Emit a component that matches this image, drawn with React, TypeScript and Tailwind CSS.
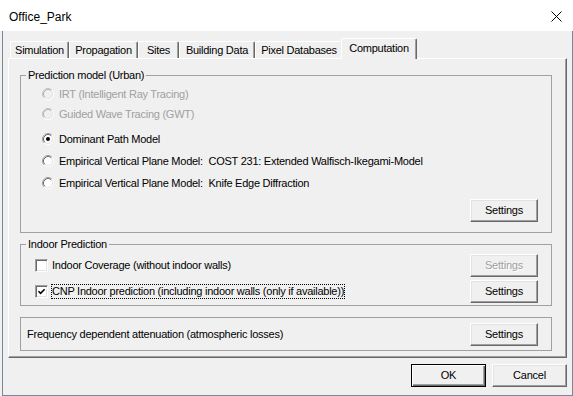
import type { ReactNode } from "react";

const tabs = [
  { label: "Simulation", width: "w-[59px]" },
  { label: "Propagation", width: "w-[69px]" },
  { label: "Sites", width: "w-[41px]" },
  { label: "Building Data", width: "w-[76px]" },
  { label: "Pixel Databases", width: "w-[88px]" },
];

function Radio({ checked = false, disabled = false }: { checked?: boolean; disabled?: boolean }) {
  const outer = disabled ? "#c4c4c4" : "#a0a0a0";
  const inner = disabled ? "#b0b0b0" : "#696969";
  return (
    <svg width="12" height="12" viewBox="0 0 12 12" className="shrink-0">
      <circle cx="6" cy="6" r="4.5" fill={disabled ? "#f0f0f0" : "#ffffff"} />
      <path d="M2.11 9.89 A5.5 5.5 0 0 1 9.89 2.11" fill="none" stroke={outer} strokeWidth="1" />
      <path d="M9.89 2.11 A5.5 5.5 0 0 1 2.11 9.89" fill="none" stroke="#ffffff" strokeWidth="1" />
      <path d="M2.82 9.18 A4.5 4.5 0 0 1 9.18 2.82" fill="none" stroke={inner} strokeWidth="1" />
      <path d="M9.18 2.82 A4.5 4.5 0 0 1 2.82 9.18" fill="none" stroke="#e3e3e3" strokeWidth="1" />
      {checked ? <circle cx="6" cy="6" r="2" fill="#000000" /> : null}
    </svg>
  );
}

function Checkbox({ checked = false }: { checked?: boolean }) {
  return (
    <div className="flex h-[13px] w-[13px] shrink-0 items-center justify-center border border-t-[#a0a0a0] border-l-[#a0a0a0] border-r-white border-b-white bg-white shadow-[inset_1px_1px_0_#696969,inset_-1px_-1px_0_#e3e3e3]">
      {checked ? (
        <svg width="9" height="9" viewBox="0 0 9 9">
          <path d="M1.5 4.2 L3.6 6.3 L7.6 2.2" fill="none" stroke="#000000" strokeWidth="1.6" />
        </svg>
      ) : null}
    </div>
  );
}

function Button({ children, disabled = false, isDefault = false, width = "w-[68px]" }: { children: ReactNode; disabled?: boolean; isDefault?: boolean; width?: string }) {
  if (isDefault) {
    return (
      <button
        type="button"
        className={`${width} h-[23px] border border-black bg-[#f0f0f0] text-[11px] tracking-[-0.2px] text-black shadow-[inset_1px_1px_0_#ffffff,inset_-1px_-1px_0_#696969,inset_-2px_-2px_0_#a0a0a0]`}
      >
        {children}
      </button>
    );
  }
  return (
    <button
      type="button"
      disabled={disabled}
      className={`${width} h-[23px] border border-t-white border-l-white border-r-[#696969] border-b-[#696969] bg-[#f0f0f0] text-[11px] tracking-[-0.2px] shadow-[inset_-1px_-1px_0_#a0a0a0,inset_1px_1px_0_#e3e3e3] ${disabled ? "text-[#a0a0a0] [text-shadow:1px_1px_0_#ffffff]" : "text-black"}`}
    >
      {children}
    </button>
  );
}

function RadioRow({ label, checked, disabled, spacing }: { label: string; checked?: boolean; disabled?: boolean; spacing: string }) {
  return (
    <div className={`flex h-[20px] items-center ${spacing}`}>
      <Radio checked={checked} disabled={disabled} />
      <span className={`ml-[5px] whitespace-pre ${disabled ? "text-[#a0a0a0]" : "text-black"}`}>{label}</span>
    </div>
  );
}

export default function App() {
  return (
    <div className="flex h-[396px] w-[573px] flex-col overflow-hidden bg-[#f0f0f0] font-['Liberation_Sans',Arial,sans-serif] text-[11px] tracking-[-0.25px] text-black">
      <div className="flex h-[31px] shrink-0 items-center justify-between bg-white">
        <span className="pl-[9px] pt-[2px] text-[12px] tracking-[0px]">Office_Park</span>
        <svg width="11" height="11" viewBox="0 0 11 11" className="mr-[11px] mt-[2px]">
          <path d="M0.5 0.5 L10.5 10.5 M10.5 0.5 L0.5 10.5" stroke="#000000" strokeWidth="1" />
        </svg>
      </div>

      <div className="ml-[2px] flex flex-1 flex-col border-b border-l border-r border-[#7a8699]">
        <div className="mx-[5px] mt-[7px] flex flex-col">
          <div className="flex h-[20px] items-end pl-[2px]">
            {tabs.map((tab) => (
              <div
                key={tab.label}
                className={`${tab.width} flex h-[17px] items-center justify-center rounded-t-[2px] border-l border-t border-r border-l-white border-t-white border-r-[#696969] shadow-[inset_-1px_0_0_#a0a0a0]`}
              >
                {tab.label}
              </div>
            ))}
            <div className="relative z-10 -mx-[2px] -mb-[1px] flex h-[21px] w-[76px] items-center justify-center rounded-t-[2px] border-l border-t border-r border-l-white border-t-white border-r-[#696969] bg-[#f0f0f0] pb-[2px] shadow-[inset_-1px_0_0_#a0a0a0]">
              Computation
            </div>
          </div>

          <div className="flex h-[300px] flex-col border border-t-white border-l-white border-r-[#696969] border-b-[#696969] pl-[11px] pr-[14px] pt-[9px] shadow-[inset_-1px_-1px_0_#a0a0a0]">
            <fieldset className="border border-[#a0a0a0]">
              <legend className="ml-[5px] px-[2px] leading-[14px]">Prediction model (Urban)</legend>
              <div className="flex flex-col pb-[10px] pl-[21px] pr-[13px]">
                <RadioRow label="IRT (Intelligent Ray Tracing)" disabled spacing="mt-[2px]" />
                <RadioRow label="Guided Wave Tracing (GWT)" disabled spacing="" />
                <RadioRow label="Dominant Path Model" checked spacing="mt-[5px]" />
                <RadioRow label="Empirical Vertical Plane Model:  COST 231: Extended Walfisch-Ikegami-Model" spacing="mt-[2px]" />
                <RadioRow label="Empirical Vertical Plane Model:  Knife Edge Diffraction" spacing="mt-[2px]" />
                <div className="mt-[6px] flex justify-end">
                  <Button>Settings</Button>
                </div>
              </div>
            </fieldset>

            <fieldset className="mt-[4px] border border-[#a0a0a0]">
              <legend className="ml-[5px] px-[2px] leading-[14px]">Indoor Prediction</legend>
              <div className="flex flex-col pb-[2px] pl-[14px] pr-[13px]">
                <div className="mt-[3px] flex h-[23px] items-center justify-between">
                  <div className="flex items-center">
                    <Checkbox />
                    <span className="ml-[4px]">Indoor Coverage (without indoor walls)</span>
                  </div>
                  <Button disabled>Settings</Button>
                </div>
                <div className="mt-[3px] flex h-[23px] items-center justify-between">
                  <div className="flex items-center">
                    <Checkbox checked />
                    <span className="ml-[3px] border border-dotted border-black leading-[13px]">
                      CNP Indoor prediction (including indoor walls (only if available))
                    </span>
                  </div>
                  <Button>Settings</Button>
                </div>
              </div>
            </fieldset>

            <div className="mt-[11px] flex h-[34px] items-center justify-between border border-[#a0a0a0] pl-[6px] pr-[13px]">
              <span>Frequency dependent attenuation (atmospheric losses)</span>
              <Button>Settings</Button>
            </div>
          </div>
        </div>

        <div className="mt-[6px] flex justify-end gap-[6px] pr-[5px]">
          <Button isDefault width="w-[75px]">OK</Button>
          <Button width="w-[75px]">Cancel</Button>
        </div>
      </div>
    </div>
  );
}
